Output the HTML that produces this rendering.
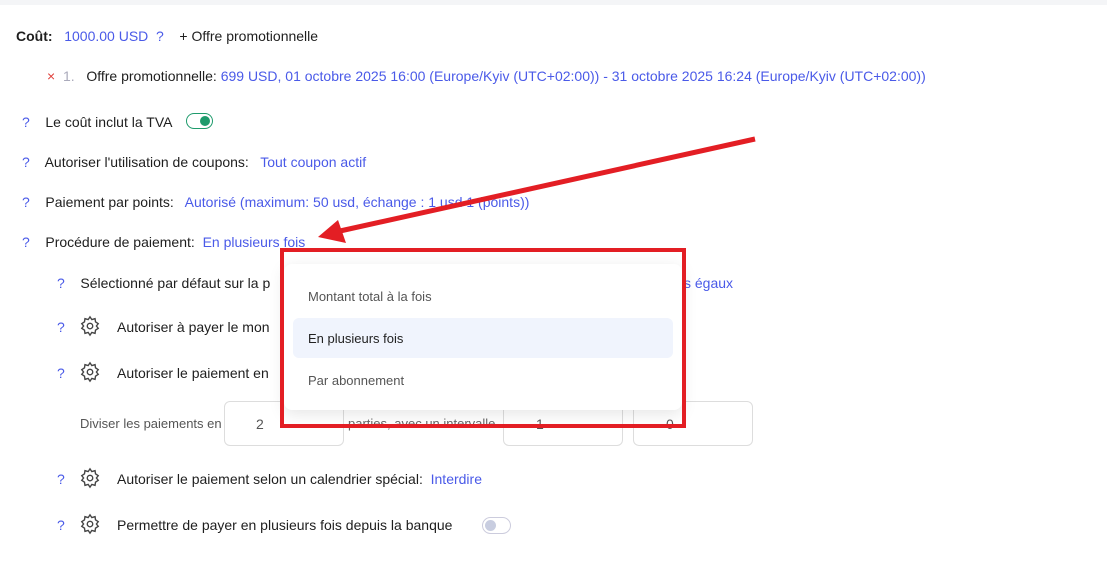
<!DOCTYPE html><html><head><style>
body{margin:0;width:1107px;height:576px;background:#fff;font-family:"Liberation Sans",sans-serif;font-size:14px;color:#1e1e1e;position:relative;overflow:hidden}
.a{position:absolute;white-space:nowrap}
.b{color:#4a5ae8}
.q{color:#4a5ae8}
.g{position:absolute;width:22px;height:22px}
</style></head><body>
<div class="a" style="left:0;top:0;width:1107px;height:5px;background:#f4f5f7"></div>
<div class="a" style="left:16px;top:28px"><b>Coût:</b> &nbsp; <span class="b">1000.00 USD &nbsp;?</span> &nbsp;&nbsp; + Offre promotionnelle</div>
<div class="a" style="left:47px;top:68px"><span style="color:#e0413c">×</span> &nbsp;<span style="color:#aab">1.</span> &nbsp; Offre promotionnelle: <span class="b">699 USD, 01 octobre 2025 16:00 (Europe/Kyiv (UTC+02:00)) - 31 octobre 2025 16:24 (Europe/Kyiv (UTC+02:00))</span></div>
<div class="a" style="left:22px;top:114px"><span class="q">?</span> &nbsp;&nbsp; Le coût inclut la TVA</div>
<div class="a" style="left:186px;top:113px;width:25px;height:14px;border:1.5px solid #1e9b6c;border-radius:9px"><div style="position:absolute;right:2px;top:2px;width:10px;height:10px;border-radius:50%;background:#1e9b6c"></div></div>
<div class="a" style="left:22px;top:154px"><span class="q">?</span> &nbsp;&nbsp; Autoriser l'utilisation de coupons: &nbsp; <span class="b">Tout coupon actif</span></div>
<div class="a" style="left:22px;top:194px"><span class="q">?</span> &nbsp;&nbsp; Paiement par points: &nbsp; <span class="b">Autorisé (maximum: 50 usd, échange : 1 usd 1 (points))</span></div>
<div class="a" style="left:22px;top:234px"><span class="q">?</span> &nbsp;&nbsp; Procédure de paiement: &nbsp;<span class="b">En plusieurs fois</span></div>
<div class="a" style="left:57px;top:275px"><span class="q">?</span> &nbsp;&nbsp; Sélectionné par défaut sur la p</div>
<div class="a b" style="left:684px;top:275px">s égaux</div>
<div class="a" style="left:57px;top:319px"><span class="q">?</span></div><div class="a" style="left:117px;top:319px">Autoriser à payer le mon</div>
<div class="a" style="left:57px;top:365px"><span class="q">?</span></div><div class="a" style="left:117px;top:365px">Autoriser le paiement en</div>
<div class="a" style="left:80px;top:416px;color:#555;font-size:13px">Diviser les paiements en</div>
<div class="a" style="left:224px;top:401px;width:118px;height:43px;border:1px solid #ddd;border-radius:6px"></div>
<div class="a" style="left:256px;top:416px;color:#555">2</div>
<div class="a" style="left:348px;top:416px;color:#666;font-size:13px">parties, avec un intervalle</div>
<div class="a" style="left:503px;top:401px;width:118px;height:43px;border:1px solid #ddd;border-radius:6px"></div>
<div class="a" style="left:536px;top:416px;color:#555">1</div>
<div class="a" style="left:633px;top:401px;width:118px;height:43px;border:1px solid #ddd;border-radius:6px"></div>
<div class="a" style="left:666px;top:416px;color:#555">0</div>
<div class="a" style="left:57px;top:471px"><span class="q">?</span></div><div class="a" style="left:117px;top:471px">Autoriser le paiement selon un calendrier spécial: &nbsp;<span class="b">Interdire</span></div>
<div class="a" style="left:57px;top:517px"><span class="q">?</span></div><div class="a" style="left:117px;top:517px">Permettre de payer en plusieurs fois depuis la banque</div>
<div class="a" style="left:482px;top:517px;width:27px;height:15px;border:1px solid #ccd;border-radius:9px"><div style="position:absolute;left:2px;top:2px;width:11px;height:11px;border-radius:50%;background:#c8cde0"></div></div>
<svg class="g" style="left:79px;top:315px" viewBox="0 0 24 24" fill="none" stroke="#444" stroke-width="1.5"><circle cx="12" cy="12" r="3"/><path d="M12 2l2 3 3.5-1 .5 3.5 3 2-2 2.5 2 2.5-3 2-.5 3.5-3.5-1-2 3-2-3-3.5 1-.5-3.5-3-2 2-2.5-2-2.5 3-2 .5-3.5 3.5 1z"/></svg>
<svg class="g" style="left:79px;top:361px" viewBox="0 0 24 24" fill="none" stroke="#444" stroke-width="1.5"><circle cx="12" cy="12" r="3"/><path d="M12 2l2 3 3.5-1 .5 3.5 3 2-2 2.5 2 2.5-3 2-.5 3.5-3.5-1-2 3-2-3-3.5 1-.5-3.5-3-2 2-2.5-2-2.5 3-2 .5-3.5 3.5 1z"/></svg>
<svg class="g" style="left:79px;top:467px" viewBox="0 0 24 24" fill="none" stroke="#444" stroke-width="1.5"><circle cx="12" cy="12" r="3"/><path d="M12 2l2 3 3.5-1 .5 3.5 3 2-2 2.5 2 2.5-3 2-.5 3.5-3.5-1-2 3-2-3-3.5 1-.5-3.5-3-2 2-2.5-2-2.5 3-2 .5-3.5 3.5 1z"/></svg>
<svg class="g" style="left:79px;top:513px" viewBox="0 0 24 24" fill="none" stroke="#444" stroke-width="1.5"><circle cx="12" cy="12" r="3"/><path d="M12 2l2 3 3.5-1 .5 3.5 3 2-2 2.5 2 2.5-3 2-.5 3.5-3.5-1-2 3-2-3-3.5 1-.5-3.5-3-2 2-2.5-2-2.5 3-2 .5-3.5 3.5 1z"/></svg>
<div class="a" style="left:284px;top:264px;width:398px;height:146px;background:#fff;border-radius:8px;box-shadow:0 4px 16px rgba(0,0,0,.1)"></div>
<div class="a" style="left:293px;top:318px;width:380px;height:40px;background:#f0f4fd;border-radius:6px"></div>
<div class="a" style="left:308px;top:289px;color:#555;font-size:13px">Montant total à la fois</div>
<div class="a" style="left:308px;top:331px;color:#222;font-size:13px">En plusieurs fois</div>
<div class="a" style="left:308px;top:373px;color:#555;font-size:13px">Par abonnement</div>
<div class="a" style="left:280px;top:248px;width:398px;height:172px;border:4px solid #e31e24"></div>
<svg class="a" style="left:0;top:0" width="1107" height="576"><line x1="755" y1="139" x2="340" y2="231" stroke="#e31e24" stroke-width="5"/><polygon points="318,237 338,220 346,243" fill="#e31e24"/></svg>
</body></html>
